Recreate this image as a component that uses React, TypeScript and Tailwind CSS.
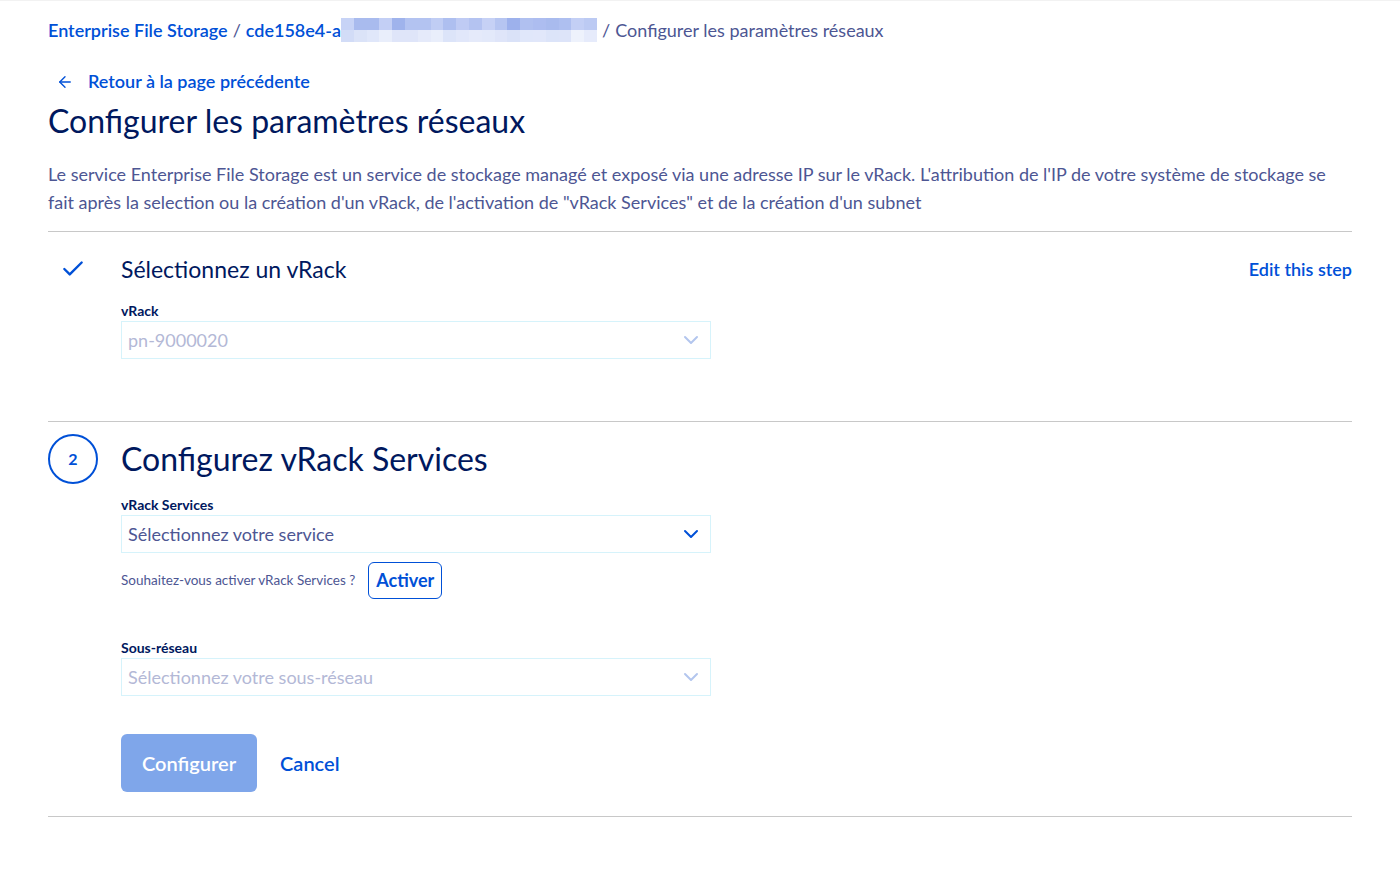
import { ArrowLeft, Check, ChevronDown } from "lucide-react";

const font = { fontFamily: "Lato, 'Noto Sans', sans-serif" };

// pixelated blur over the masked id in the breadcrumb
const blurTop = [
  "#c7d3f6", "#a9bbee", "#a9bbee", "#c3cff5", "#9fb3ec", "#b3c3f1", "#b3c3f1", "#c0cdf4", "#aebff0",
  "#bfcbf4", "#b4c3f1", "#c6d1f5", "#b6c5f1", "#9db1ec", "#b0c0f0", "#adbdf0", "#a9bbee", "#aebff0",
  "#c3cff5", "#bccaf3",
];
const blurBottom = [
  "#d2dcf7", "#dbe3f8", "#e0e7fa", "#e9eefb", "#dfe5f9", "#dfe5f9", "#e5eafa", "#e9eefb", "#dce4f9",
  "#e1e7fa", "#e5eafa", "#e3e9fa", "#dfe5f9", "#dae2f8", "#e0e7fa", "#e1e7fa", "#dce4f9", "#dde4f9",
  "#eef2fc", "#e6ebfb",
];

function Select({
  label,
  value,
  disabled,
}: {
  label: string;
  value: string;
  disabled?: boolean;
}) {
  return (
    <div className="w-[590px]">
      <label className="block text-[14px] font-bold leading-[18px] text-[#00185e]">{label}</label>
      <div className="mt-[1px] flex h-[38px] items-center justify-between border border-[#d6f3fb] bg-white pl-[6px] pr-[7px]">
        <span
          className={`text-[18px] ${disabled ? "text-[#b3b8d6]" : "text-[#4d5693]"}`}
        >
          {value}
        </span>
        <ChevronDown
          className={`h-6 w-6 ${disabled ? "text-[#b3c6ee]" : "text-[#0050d7]"}`}
          strokeWidth={2}
        />
      </div>
    </div>
  );
}

export default function App() {
  return (
    <div className="min-h-[886px] border-t border-[#f2f2f2] bg-white px-[48px]" style={font}>
      {/* Breadcrumb */}
      <nav className="flex h-[58px] items-center pb-[1px] text-[18px] leading-none">
        <span className="font-semibold text-[#0050d7]">Enterprise File Storage</span>
        <span className="mx-[5px] text-[#4d5693]">/</span>
        <span className="font-semibold text-[#0050d7]">cde158e4-a</span>
        <span className="flex h-[24px] w-[256px] flex-col">
          <span className="flex h-[12px]">
            {blurTop.map((c, i) => (
              <span key={i} className="h-full flex-1" style={{ backgroundColor: c }} />
            ))}
          </span>
          <span className="flex h-[12px]">
            {blurBottom.map((c, i) => (
              <span key={i} className="h-full flex-1" style={{ backgroundColor: c }} />
            ))}
          </span>
        </span>
        <span className="mx-[5px] text-[#4d5693]">/</span>
        <span className="text-[#4d5693]">Configurer les paramètres réseaux</span>
      </nav>

      {/* Back link */}
      <a className="mt-[9px] flex items-center gap-[14px] pl-[8px] text-[18px] font-semibold text-[#0050d7]">
        <ArrowLeft className="h-[18px] w-[18px]" strokeWidth={1.8} />
        <span>Retour à la page précédente</span>
      </a>

      <h1 className="mt-[6px] text-[32px] leading-[40px] text-[#00185e]">
        Configurer les paramètres réseaux
      </h1>

      <p className="mt-[19px] text-[18px] leading-[28px] text-[#4d5693]">
        Le service Enterprise File Storage est un service de stockage managé et exposé via une adresse IP
        sur le vRack. L'attribution de l'IP de votre système de stockage se
        <br />
        fait après la selection ou la création d'un vRack, de l'activation de "vRack Services" et de la
        création d'un subnet
      </p>

      {/* Step 1 */}
      <section className="mt-[15px] border-t border-[#c8c8c8] pb-[62px] pt-[21px]">
        <div className="flex items-center">
          <div className="flex w-[73px] justify-start pl-[12px]">
            <Check className="h-[26px] w-[26px] text-[#0050d7]" strokeWidth={2.2} />
          </div>
          <h2 className="flex-1 text-[23px] leading-[32px] text-[#00185e]">Sélectionnez un vRack</h2>
          <a className="text-[18px] font-semibold text-[#0050d7]">Edit this step</a>
        </div>
        <div className="ml-[73px] mt-[17px]">
          <Select label="vRack" value="pn-9000020" disabled />
        </div>
      </section>

      {/* Step 2 */}
      <section className="border-t border-[#c8c8c8] pb-[24px] pt-[12px]">
        <div className="flex items-center">
          <div className="w-[73px]">
            <div className="flex h-[50px] w-[50px] items-center justify-center rounded-full border-2 border-[#0050d7] text-[16px] font-bold text-[#0050d7]">
              2
            </div>
          </div>
          <h2 className="text-[32px] leading-[40px] text-[#00185e]">Configurez vRack Services</h2>
        </div>
        <div className="ml-[73px] mt-[12px]">
          <Select label="vRack Services" value="Sélectionnez votre service" />
          <div className="mt-[9px] flex items-center gap-[13px]">
            <span className="text-[13.5px] text-[#4d5693]">Souhaitez-vous activer vRack Services ?</span>
            <button className="h-[37px] rounded-[6px] border-[1.5px] border-[#0050d7] px-[7px] text-[18px] font-bold text-[#0050d7]">
              Activer
            </button>
          </div>
          <div className="mt-[40px]">
            <Select label="Sous-réseau" value="Sélectionnez votre sous-réseau" disabled />
          </div>
          <div className="mt-[38px] flex items-center gap-[23px]">
            <button className="h-[58px] rounded-[6px] bg-[#7fa6ea] px-[21px] text-[20px] font-semibold text-white">
              Configurer
            </button>
            <a className="text-[20px] font-semibold text-[#0050d7]">Cancel</a>
          </div>
        </div>
      </section>
      <div className="border-t border-[#c8c8c8]" />
    </div>
  );
}
